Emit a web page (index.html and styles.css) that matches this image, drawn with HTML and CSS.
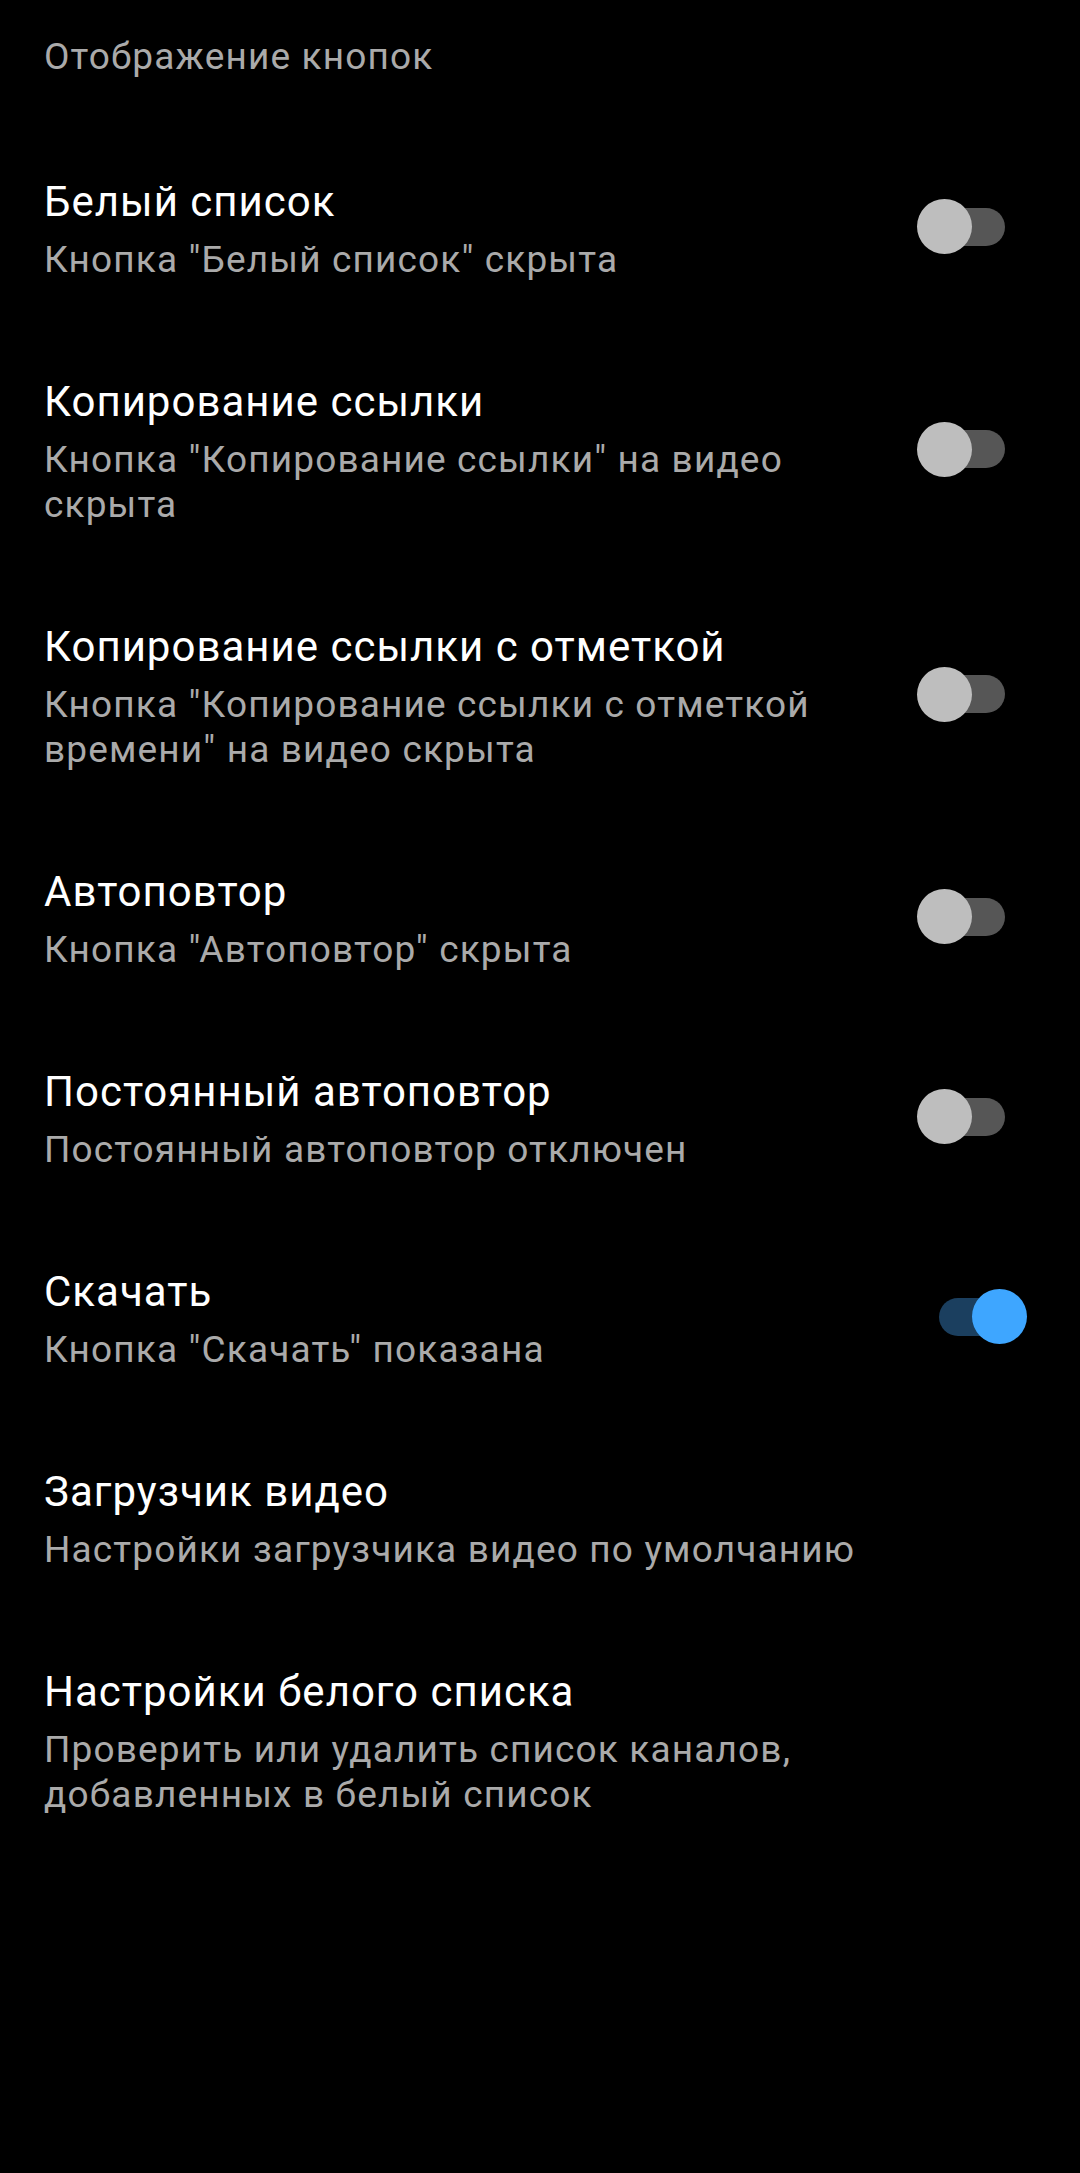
FILE: index.html
```html
<!DOCTYPE html>
<html lang="ru">
<head>
<meta charset="utf-8">
<title>Отображение кнопок</title>
<link rel="stylesheet" href="styles.css">
</head>
<body>
<div class="screen">
  <div class="category">Отображение кнопок</div>

  <div class="pref">
    <div class="text">
      <div class="title">Белый список</div>
      <div class="summary">Кнопка "Белый список" скрыта</div>
    </div>
    <div class="switch"><span class="thumb"></span></div>
  </div>

  <div class="pref">
    <div class="text">
      <div class="title">Копирование ссылки</div>
      <div class="summary">Кнопка "Копирование ссылки" на видео скрыта</div>
    </div>
    <div class="switch"><span class="thumb"></span></div>
  </div>

  <div class="pref">
    <div class="text">
      <div class="title">Копирование ссылки с отметкой</div>
      <div class="summary">Кнопка "Копирование ссылки с отметкой времени" на видео скрыта</div>
    </div>
    <div class="switch"><span class="thumb"></span></div>
  </div>

  <div class="pref">
    <div class="text">
      <div class="title">Автоповтор</div>
      <div class="summary">Кнопка "Автоповтор" скрыта</div>
    </div>
    <div class="switch"><span class="thumb"></span></div>
  </div>

  <div class="pref">
    <div class="text">
      <div class="title">Постоянный автоповтор</div>
      <div class="summary">Постоянный автоповтор отключен</div>
    </div>
    <div class="switch"><span class="thumb"></span></div>
  </div>

  <div class="pref">
    <div class="text">
      <div class="title">Скачать</div>
      <div class="summary">Кнопка "Скачать" показана</div>
    </div>
    <div class="switch on"><span class="thumb"></span></div>
  </div>

  <div class="pref plain">
    <div class="text">
      <div class="title">Загрузчик видео</div>
      <div class="summary">Настройки загрузчика видео по умолчанию</div>
    </div>
  </div>

  <div class="pref plain">
    <div class="text">
      <div class="title">Настройки белого списка</div>
      <div class="summary">Проверить или удалить список каналов, добавленных в белый список</div>
    </div>
  </div>
</div>
</body>
</html>
```

FILE: styles.css
```css
html, body {
  margin: 0;
  padding: 0;
  background: #000;
}

body {
  width: 1080px;
  min-height: 2173px;
  font-family: Roboto, "Noto Sans", "Liberation Sans", sans-serif;
  -webkit-font-smoothing: antialiased;
}

.screen {
  display: flex;
  flex-direction: column;
}

.category {
  padding: 34px 42px 48px 44px;
  font-size: 37px;
  line-height: 45px;
  letter-spacing: 1.15px;
  color: #aaaaaa;
}

.pref {
  display: flex;
  align-items: center;
  padding: 50px 0 45px 44px;
}

.pref.plain {
  padding-right: 60px;
}

.text {
  flex: 1;
  min-width: 0;
}

.title {
  font-size: 42px;
  line-height: 50px;
  letter-spacing: 1px;
  color: #ffffff;
  margin-bottom: 10px;
}

.summary {
  font-size: 37px;
  line-height: 45px;
  letter-spacing: 1.15px;
  color: #aaaaaa;
}

.switch {
  position: relative;
  flex: none;
  width: 66px;
  height: 38px;
  margin-left: 48px;
  margin-right: 75px;
  margin-bottom: 6px;
  border-radius: 19px;
  background: #565656;
}

.thumb {
  position: absolute;
  top: -8.5px;
  left: -22px;
  width: 55px;
  height: 55px;
  border-radius: 50%;
  background: #bebebe;
}

.switch.on {
  background: #1b3f5f;
}

.switch.on .thumb {
  left: 33px;
  background: #3ea6ff;
}
```
